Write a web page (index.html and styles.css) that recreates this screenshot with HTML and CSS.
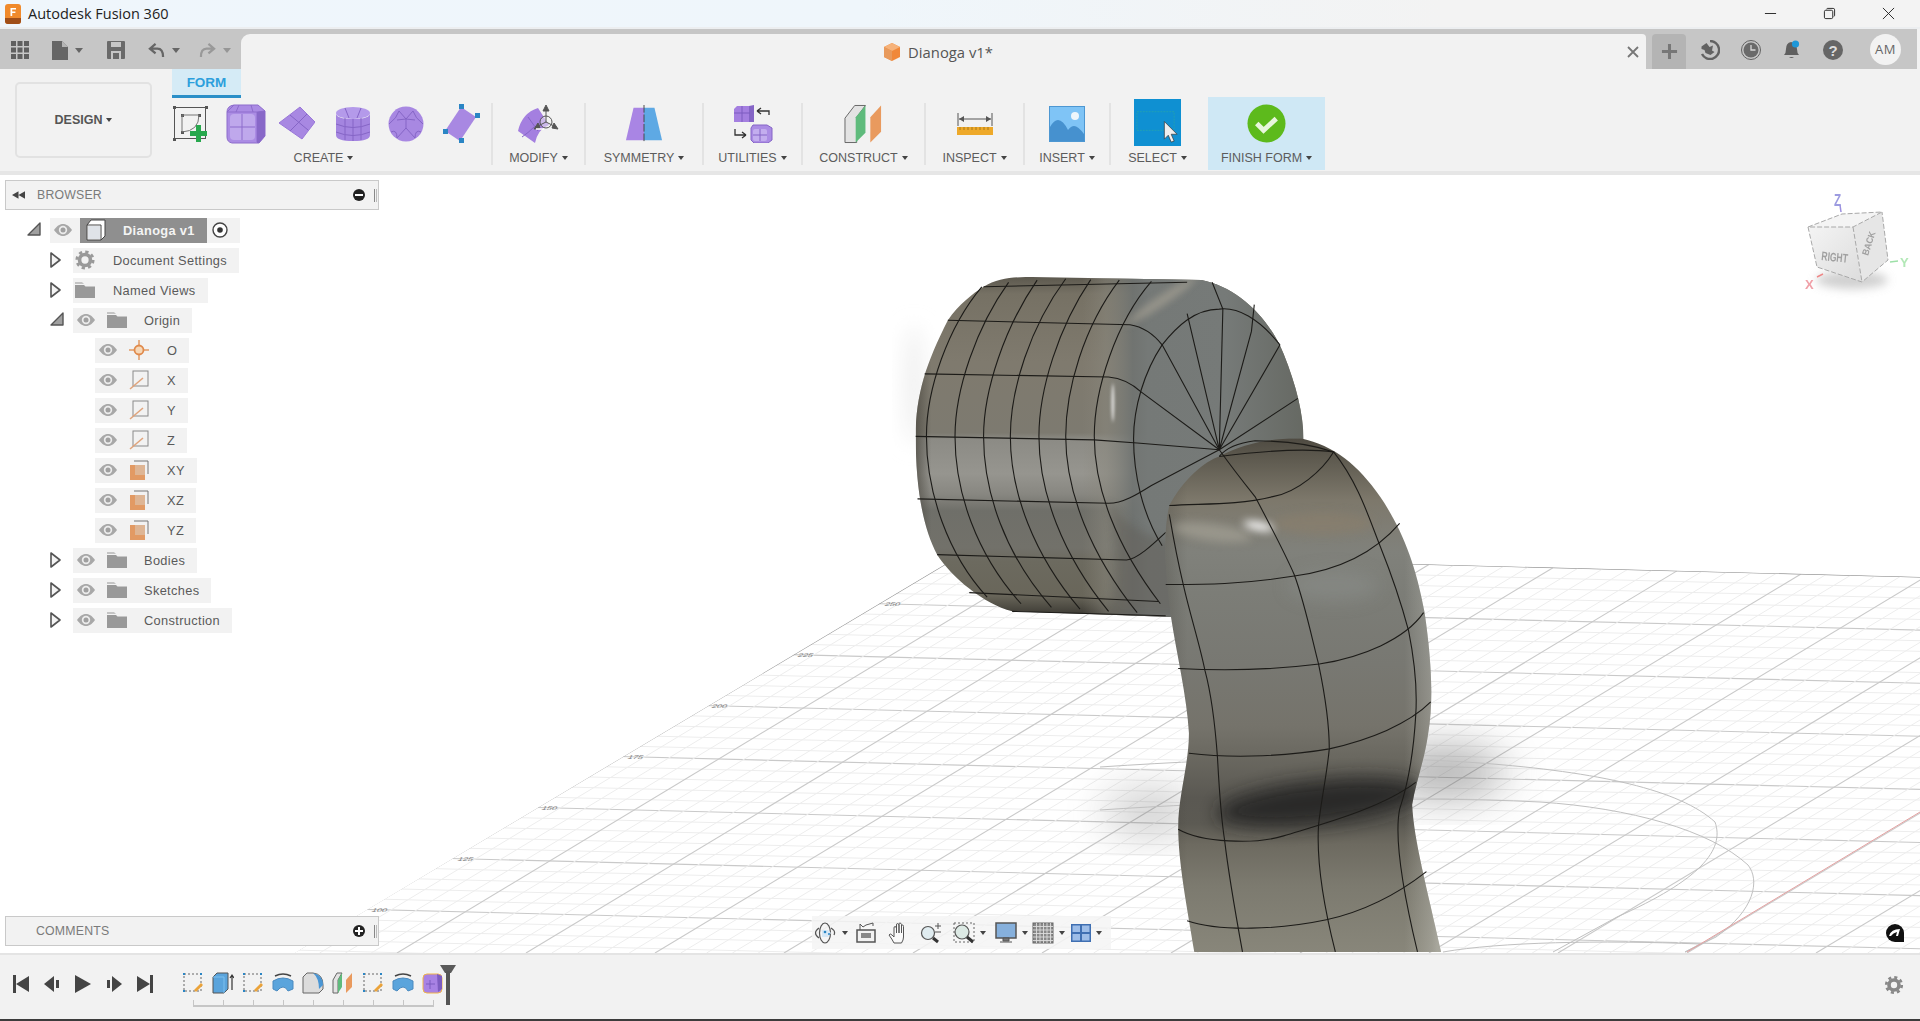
FILE: index.html
```html
<!DOCTYPE html>
<html lang="en">
<head>
<meta charset="utf-8">
<title>Autodesk Fusion 360</title>
<link rel="stylesheet" href="styles.css">
</head>
<body>
<svg class="defs" width="0" height="0" aria-hidden="true">
  <defs>
    <symbol id="eye" viewBox="0 0 20 14"><path d="M1 7C4 2.500 7.500 1 10 1s6 1.500 9 6c-3 4.500-6.500 6-9 6s-6-1.500-9-6z" fill="#a8a8a8"/><circle cx="10" cy="7" r="4.200" fill="#ececec"/><circle cx="10" cy="7" r="2.500" fill="#a0a0a0"/></symbol>
    <symbol id="folder" viewBox="0 0 20 16"><path d="M0 0h7l2 2h-9z" fill="#c4c4c4"/><path d="M0 3h9l1.500 1.500H20V16H0z" fill="#999"/></symbol>
    <symbol id="tw-right" viewBox="0 0 14 18"><path d="M2 2l9 7-9 7z" fill="#f4f4f4" stroke="#555" stroke-width="1.600" stroke-linejoin="round"/></symbol>
    <symbol id="tw-down" viewBox="0 0 16 16"><path d="M14 2v12H2z" fill="#a0a0a0" stroke="#555" stroke-width="1.400" stroke-linejoin="round"/></symbol>
    <symbol id="axis" viewBox="0 0 20 20"><rect x="4" y="1" width="15" height="15" fill="none" stroke="#8a8a8a"/><path d="M1 19L14 8" stroke="#e0a47c" stroke-width="1.600"/></symbol>
    <symbol id="plane" viewBox="0 0 20 20"><path d="M5 1h14v13" fill="none" stroke="#777" stroke-width="1"/><rect x="1" y="5" width="15" height="15" fill="#e29a64"/><rect x="6" y="5" width="10" height="10" fill="#deb594"/></symbol>
    <symbol id="mini-sketch" viewBox="0 0 22 22"><rect x="2" y="2" width="17" height="17" fill="none" stroke="#666" stroke-dasharray="2 2"/><path d="M1 1h2v2H1zM18 1h2v2h-2zM1 18h2v2H1z" fill="#2a85c4"/><path d="M12 18l7-7 2 2-7 7z" fill="#eba33a"/></symbol>
    <symbol id="mini-form" viewBox="0 0 22 22"><path d="M3 4q8-4 16 0" fill="none" stroke="#444" stroke-width="1.500"/><path d="M1 9q10-6 20 0v8l-5 2q-2-4-5-4t-6 4l-4-2z" fill="#5aa4dc" stroke="#4a8ac0"/></symbol>
  </defs>
</svg>

<header class="titlebar">
  <div class="app-title">
    <svg class="app-logo" viewBox="0 0 16 20"><rect width="16" height="20" rx="3" fill="#f08a2c"/><path d="M0 14h16v3a3 3 0 0 1-3 3H3a3 3 0 0 1-3-3z" fill="#a04e18"/><path d="M5.500 4h5.500v1.600H7.200v1.800h3.200V9H7.200v3H5.500z" fill="#fff"/></svg>
    <span>Autodesk Fusion 360</span>
  </div>
  <div class="win-controls">
    <svg class="win-btn" viewBox="0 0 14 14"><path d="M1 7h12" stroke="#222" stroke-width="1"/></svg>
    <svg class="win-btn" viewBox="0 0 14 14"><rect x="1.500" y="3.500" width="9" height="9" rx="1.500" fill="none" stroke="#222"/><path d="M4 2.500q0-1 1-1h6q1.500 0 1.500 1.500v6q0 1-1 1" fill="none" stroke="#222"/></svg>
    <svg class="win-btn" viewBox="0 0 14 14"><path d="M1 1l12 12M13 1L1 13" stroke="#222" stroke-width="1"/></svg>
  </div>
</header>

<nav class="tabbar">
  <div class="quick">
    <svg class="q-grid" viewBox="0 0 18 18" fill="#5f5f5f"><rect width="5" height="5"/><rect x="6.500" width="5" height="5"/><rect x="13" width="5" height="5"/><rect y="6.500" width="5" height="5"/><rect x="6.500" y="6.500" width="5" height="5"/><rect x="13" y="6.500" width="5" height="5"/><rect y="13" width="5" height="5"/><rect x="6.500" y="13" width="5" height="5"/><rect x="13" y="13" width="5" height="5"/></svg>
    <svg class="q-doc" viewBox="0 0 16 19"><path d="M0 0h10l6 6v13H0z" fill="#666"/><path d="M10 0v6h6z" fill="#b5b5b5"/></svg>
    <span class="q-caret"></span>
    <svg class="q-save" viewBox="0 0 18 18"><path d="M0 1a1 1 0 0 1 1-1h16a1 1 0 0 1 1 1v16a1 1 0 0 1-1 1H1a1 1 0 0 1-1-1z" fill="#6a6a6a"/><rect x="4" y="1" width="10" height="5" fill="#c6c6c6"/><rect x="4" y="10" width="10" height="8" fill="#c6c6c6"/><rect x="6" y="12" width="6" height="6" fill="#6a6a6a"/></svg>
    <svg class="q-undo" viewBox="0 0 18 16"><path d="M8 1L2 6l6 5M2 6h8q6 0 6 9" fill="none" stroke="#666" stroke-width="2.400"/></svg>
    <span class="q-caret"></span>
    <svg class="q-redo" viewBox="0 0 18 16"><path d="M10 1l6 5-6 5M16 6H8q-6 0-6 9" fill="none" stroke="#999" stroke-width="2.400"/></svg>
    <span class="q-caret q-caret-dim"></span>
  </div>
  <div class="doc-tab">
    <div class="doc-name">
      <svg class="doc-cube" viewBox="0 0 20 20"><path d="M10 1l8 4v10l-8 4-8-4V5z" fill="#f0883a"/><path d="M10 1l8 4-8 4-8-4z" fill="#f6b27a"/><path d="M2 5l8 4v10l-8-4z" fill="#e89a5c"/></svg>
      <span>Dianoga v1*</span>
    </div>
    <svg class="doc-close" viewBox="0 0 12 12"><path d="M1 1l10 10M11 1L1 11" stroke="#777" stroke-width="1.800"/></svg>
  </div>
  <div class="tab-right">
    <div class="plus-btn"><svg viewBox="0 0 18 18"><path d="M9 1v16M1 9h16" stroke="#777" stroke-width="3.200"/></svg></div>
    <svg class="tr-icon tr-first" viewBox="0 0 20 20"><path d="M10 1a9 9 0 1 1-8 13" fill="none" stroke="#626262" stroke-width="2.400"/><path d="M1.500 6.500l5-3.500 3 4 3.500-1.500-1 5 2.500 1.500-4 3-5-2-1-3-3-1z" fill="#626262"/></svg>
    <svg class="tr-icon" viewBox="0 0 20 20"><circle cx="10" cy="10" r="9.500" fill="none" stroke="#626262"/><circle cx="10" cy="10" r="7.500" fill="#6a6a6a"/><path d="M10 5v5h4.500" fill="none" stroke="#d8d8d8" stroke-width="1.300"/></svg>
    <svg class="tr-icon" viewBox="0 0 20 20"><path d="M9 2q-5 1-5 7 0 4-2 6h15q-2-2-2-6 0-6-6-7z" fill="#5f5f5f"/><path d="M7 17h5q-2.500 2-5 0z" fill="#5f5f5f"/><circle cx="13.500" cy="4" r="3.600" fill="#1d97d8"/></svg>
    <svg class="tr-icon" viewBox="0 0 20 20"><circle cx="10" cy="10" r="10" fill="#666"/><text class="help-q" x="10" y="15.500" text-anchor="middle">?</text></svg>
    <div class="avatar">AM</div>
  </div>
</nav>

<section class="ribbon">
  <div class="design-btn"><span class="caret-label">DESIGN</span></div>
  <div class="tools">
    <div class="form-tab">FORM</div>
    <div class="groups">
      <div class="group g-create">
        <div class="create-icons">
          <svg class="ic36" viewBox="0 0 36 36"><rect x="1.500" y="1.500" width="31" height="31" fill="none" stroke="#555"/><path d="M0 0h3v3H0zM32 0h3v3h-3zM0 32h3v3H0zM8 8h3v3H8zM25 8h3v3h-3zM8 25h3v3H8z" fill="#555"/><path d="M9 9h17M9 9v17M26 9q0 16-17 17" fill="none" stroke="#777"/><path d="M25 23h5v6h6v5h-6v6h-5v-6h-6v-5h6z" fill="#28a84e" transform="translate(-2 -4)"/></svg>
          <svg class="ic40" viewBox="0 0 40 40"><path d="M8 1h24l7 6v25l-6 7H6q-5-1-5-6V8q0-6 7-7z" fill="#ab8ce4" stroke="#8d6ccc"/><path d="M8 1l-7 7h30l8-1M31 8v30" fill="none" stroke="#8d6ccc"/><path d="M31 8l8-1v25l-6 7h-2z" fill="#8868c8"/><rect x="4" y="10" width="25" height="26" rx="4" fill="#bfa8ec"/><path d="M16 10v26M4 23h25" stroke="#8d6ccc"/><path d="M13 1l-3 7M25 1l2 7" stroke="#8d6ccc"/></svg>
          <svg class="ic36 ic-plane" viewBox="0 0 36 36"><path d="M21 1l15 15-13 17L0 17z" fill="#a888e2" stroke="#9a78d8"/><path d="M11 9l18 15M28 8L11 25" stroke="#8565c6" stroke-width="1"/></svg>
          <svg class="ic36" viewBox="0 0 36 36"><ellipse cx="18" cy="7" rx="17" ry="6" fill="#b49aea"/><path d="M1 7v22q0 6 17 6t17-6V7q0 6-17 6T1 7z" fill="#a485e0"/><path d="M1 18q17 7 34 0M1 26q17 7 34 0M10 12v22M26 12v22M18 13v22M10 2l4 10M26 2l-4 10" fill="none" stroke="#8565c6"/></svg>
          <svg class="ic36" viewBox="0 0 36 36"><circle cx="18" cy="18" r="17.500" fill="#a888e2"/><path d="M1 18q8-6 10-13M35 18q-8-6-10-13M11 5l7 8 7-8M18 13v9l-9 10M18 22l9 10M3 26q6-3 6 6M33 26q-6-3-6 6M9 14l9-1 9 1" fill="none" stroke="#8565c6"/></svg>
          <svg class="ic40" viewBox="0 0 40 40"><path d="M20 3l15 10-16 24L4 27z" fill="#a888e2"/><path d="M18 0h5v5h-5zM34 9h5v5h-5zM2 25h5v5H2zM18 34h5v5h-5z" fill="#2a85c4"/></svg>
        </div>
        <div class="g-label g-label-create"><span class="caret-label">CREATE</span></div>
      </div>
      <i class="sep"></i>
      <div class="group g-modify">
        <div class="g-icon"><svg class="ic-mod" viewBox="0 0 42 38"><path d="M0 26Q4 8 20 3l11 17q-11 4-14 18z" fill="#a47fe0"/><path d="M10 12l10 14M4 32q6-4 12-10" fill="none" stroke="#8565c6"/><circle cx="28" cy="17" r="6" fill="#f2f2f2" fill-opacity=".5" stroke="#555"/><path d="M28 0l-3 6h6zM28 6v11M40 24l-6-1 2-5zM28 17l8 4M16 24l6-1-2-5zM28 17l-8 4" fill="#555" stroke="#555"/><path d="M18 24h8" stroke="#fff" stroke-width="1.500"/></svg></div>
        <div class="g-label"><span class="caret-label">MODIFY</span></div>
      </div>
      <i class="sep"></i>
      <div class="group g-sym">
        <div class="g-icon"><svg class="ic-sym" viewBox="0 0 40 40"><path d="M9 3h11v34H1z" fill="#a985e4"/><path d="M20 3h11l8 34H20z" fill="#5ea9e4"/><path d="M20 0v40" stroke="#444" stroke-width="1" stroke-dasharray="8 2"/></svg></div>
        <div class="g-label"><span class="caret-label">SYMMETRY</span></div>
      </div>
      <i class="sep"></i>
      <div class="group g-util">
        <div class="g-icon"><svg class="ic-util" viewBox="0 0 40 39"><path d="M4 2h16v16H1V5z" fill="#a47fe0"/><path d="M16 2l5-1v17h-5z" fill="#8565c6"/><path d="M1 9h16M9 2v16" stroke="#7d5cc0"/><path d="M20 21h14l5 3v12l-4 3H21l-3-3V24z" fill="#ab8ce4" stroke="#8565c6"/><rect x="20" y="25" width="14" height="12" rx="2" fill="#c3adee"/><path d="M27 25v12M20 31h14" stroke="#8565c6"/><path d="M36 11V7H24M24 7l4-3M24 7l4 3M2 25v6h11M13 31l-4-3M13 31l-4 3" fill="none" stroke="#333" stroke-width="1.300"/></svg></div>
        <div class="g-label"><span class="caret-label">UTILITIES</span></div>
      </div>
      <i class="sep"></i>
      <div class="group g-con">
        <div class="g-icon"><svg class="ic-con" viewBox="0 0 40 40"><path d="M1 14L11 1h11L13 13v26H1z" fill="#e3e3e3" stroke="#666"/><path d="M12 13L22 1v28l-10 10z" fill="#5fbb7c"/><path d="M27 13L38 1v27L27 39z" fill="#e99a5e"/></svg></div>
        <div class="g-label"><span class="caret-label">CONSTRUCT</span></div>
      </div>
      <i class="sep"></i>
      <div class="group g-insp">
        <div class="g-icon"><svg class="ic-insp" viewBox="0 0 36 22"><path d="M1 0v13M35 0v13" stroke="#555"/><path d="M2 6h32" stroke="#555"/><path d="M2 6l5-3v6zM34 6l-5-3v6z" fill="#555"/><rect y="14" width="36" height="8" fill="#eea92a"/><path d="M3 14v3M7 14v3M11 14v3M15 14v3M19 14v3M23 14v3M27 14v3M31 14v3" stroke="#a87a1a"/></svg></div>
        <div class="g-label"><span class="caret-label">INSPECT</span></div>
      </div>
      <i class="sep"></i>
      <div class="group g-ins">
        <div class="g-icon"><svg class="ic-ins" viewBox="0 0 36 36"><rect width="36" height="36" fill="#4d97d2"/><rect x="1" y="1" width="34" height="34" fill="#7fc4f6"/><circle cx="26" cy="10" r="4" fill="#eef6fb"/><path d="M1 35V21q4-7 8-7 5 0 10 10 3-4 6-4 4 0 10 8v7z" fill="#4691cf"/></svg></div>
        <div class="g-label"><span class="caret-label">INSERT</span></div>
      </div>
      <i class="sep"></i>
      <div class="group g-sel">
        <div class="g-icon"><svg class="ic-sel" viewBox="0 0 48 48"><rect width="48" height="48" fill="#0f90d2"/><rect x="3" y="13" width="38" height="19" fill="none" stroke="#2aa6a6" stroke-width=".7" stroke-dasharray="2 1"/><path d="M31 23l0 18 4-4 3 7 3-1-3-7 6 0z" fill="#eee" stroke="#333" stroke-width=".7"/></svg></div>
        <div class="g-label"><span class="caret-label">SELECT</span></div>
      </div>
      <div class="group g-finish">
        <div class="g-icon g-icon-fin"><svg class="ic-fin" viewBox="0 0 40 40"><circle cx="20" cy="20" r="19.500" fill="#5dba1c"/><path d="M10 20l7 7 13-12" fill="none" stroke="#e8f6dc" stroke-width="5"/></svg></div>
        <div class="g-label"><span class="caret-label">FINISH FORM</span></div>
      </div>
    </div>
  </div>
</section>

<main class="viewport">
  <svg class="scene" viewBox="0 175 1920 778" width="1920" height="778">
    <defs>
      <clipPath id="floor"><path d="M965 552.500L1920 577V953H295z"/></clipPath>
      <filter id="b40" x="-60%" y="-60%" width="220%" height="220%"><feGaussianBlur stdDeviation="22"/></filter>
      <filter id="b12" x="-60%" y="-60%" width="220%" height="220%"><feGaussianBlur stdDeviation="10"/></filter>
      <filter id="b4" x="-60%" y="-100%" width="220%" height="300%"><feGaussianBlur stdDeviation="5"/></filter>
      <filter id="soft" x="-50%" y="-200%" width="200%" height="500%"><feGaussianBlur stdDeviation="24 20"/></filter>
      <filter id="soft2" x="-50%" y="-200%" width="200%" height="500%"><feGaussianBlur stdDeviation="14 9"/></filter>
      <filter id="b2" x="-300%" y="-50%" width="700%" height="200%"><feGaussianBlur stdDeviation="5"/></filter>
      <filter id="b1"><feGaussianBlur stdDeviation=".35"/></filter>
      <linearGradient id="s1" gradientUnits="userSpaceOnUse" x1="0" y1="38" x2="0" y2="797">
        <stop offset="0" stop-color="#5c584e"/><stop offset=".05" stop-color="#767164"/><stop offset=".25" stop-color="#7f7a6e"/><stop offset=".46" stop-color="#7d7a70"/><stop offset=".48" stop-color="#8c8b85"/><stop offset=".58" stop-color="#96958f"/><stop offset=".64" stop-color="#888781"/><stop offset=".69" stop-color="#6f6f69"/><stop offset=".8" stop-color="#72716a"/><stop offset=".84" stop-color="#6c6a5f"/><stop offset=".94" stop-color="#69665a"/><stop offset="1" stop-color="#3a3832"/>
      </linearGradient>
      <linearGradient id="s1h" gradientUnits="userSpaceOnUse" x1="100" y1="0" x2="1185" y2="0">
        <stop offset="0" stop-color="#4a473f" stop-opacity=".7"/><stop offset=".04" stop-color="#4a473f" stop-opacity="0"/><stop offset=".43" stop-color="#8a867b" stop-opacity="0"/><stop offset=".49" stop-color="#8a887e" stop-opacity=".5"/><stop offset=".56" stop-color="#6f7371" stop-opacity=".9"/><stop offset=".6" stop-color="#757977"/><stop offset=".8" stop-color="#767a78"/><stop offset="1" stop-color="#666963"/>
      </linearGradient>
      <linearGradient id="s2" gradientUnits="userSpaceOnUse" x1="0" y1="400" x2="0" y2="1550">
        <stop offset="0" stop-color="#4f4b42"/><stop offset=".05" stop-color="#625e53"/><stop offset=".12" stop-color="#7d786b"/><stop offset=".17" stop-color="#7f7d74"/><stop offset=".22" stop-color="#80817b"/><stop offset=".3" stop-color="#7c7d77"/><stop offset=".44" stop-color="#787872"/><stop offset=".56" stop-color="#75736b"/><stop offset=".62" stop-color="#6a6860"/><stop offset=".7" stop-color="#5a5852"/><stop offset=".75" stop-color="#5c5a53"/><stop offset=".79" stop-color="#6d6a60"/><stop offset=".87" stop-color="#7c7a6f"/><stop offset="1" stop-color="#88867a"/>
      </linearGradient>
      <linearGradient id="s2h" gradientUnits="userSpaceOnUse" x1="800" y1="0" x2="1560" y2="0">
        <stop offset="0" stop-color="#3a3832" stop-opacity=".25"/><stop offset=".08" stop-color="#3a3832" stop-opacity="0"/><stop offset=".88" stop-color="#c8c8c0" stop-opacity="0"/><stop offset=".98" stop-color="#c8c8c0" stop-opacity=".35"/><stop offset="1" stop-color="#d8d8d0" stop-opacity=".4"/>
      </linearGradient>
      <linearGradient id="cube-l" x1="0" y1="0" x2="1" y2="1"><stop offset="0" stop-color="#f4f4f4"/><stop offset="1" stop-color="#dcdcdc"/></linearGradient>
      <clipPath id="shape1"><path d="M290 60C330 40 380 38 420 38L900 45C1000 60 1090 130 1130 210C1170 290 1190 360 1185 420L950 520L860 610L840 800L370 787C290 770 200 710 160 660C120 600 100 510 100 395C100 300 130 230 190 135C220 100 260 75 290 60Z"/></clipPath>
      <clipPath id="shape2"><path d="M810 550C850 490 910 450 950 440C1020 410 1100 398 1180 400C1270 415 1340 460 1400 530C1460 600 1500 680 1525 790C1545 900 1550 990 1535 1060C1525 1120 1500 1170 1490 1220C1495 1300 1530 1400 1571 1550H880C860 1450 835 1350 835 1270C835 1200 865 1130 865 1060C860 980 830 880 815 800C800 700 790 620 810 550Z"/></clipPath>
    </defs>

    <g clip-path="url(#floor)">
      <g id="grid"></g>
      <ellipse cx="1445" cy="772" rx="60" ry="24" fill="#555" opacity=".5" filter="url(#b40)"/>
      <ellipse cx="1150" cy="812" rx="45" ry="20" fill="#555" opacity=".35" filter="url(#b40)"/>
      <g fill="none" stroke="#c0c0c0">
        <path d="M1100 767C1250 757 1370 755 1480 763C1600 772 1680 790 1715 822C1725 850 1700 880 1617 917L1553 952"/>
        <path d="M1100 810C1220 802 1400 795 1540 802C1630 808 1710 830 1748 865C1760 880 1755 910 1716 937L1685 952"/>
        <path d="M1443 952C1500 942 1600 940 1700 944L1685 952"/>
      </g>
      <path d="M1687 952L1920 812" stroke="#e4a0a0" fill="none"/>
      <path d="M965 552.500L295 952" stroke="#8c8c8c" stroke-width="1.200"/>
      <path d="M965 552.500L1920 577" stroke="#9a9a9a"/>
    </g>

    <g class="rulers">
      <text transform="translate(884 606) skewX(-32) scale(1 .6)">250</text>
      <text transform="translate(797 657) skewX(-32) scale(1 .6)">225</text>
      <text transform="translate(711 708) skewX(-32) scale(1 .6)">200</text>
      <text transform="translate(627 759) skewX(-32) scale(1 .6)">175</text>
      <text transform="translate(541 810) skewX(-32) scale(1 .6)">150</text>
      <text transform="translate(457 861) skewX(-32) scale(1 .6)">125</text>
      <text transform="translate(371 912) skewX(-32) scale(1 .6)">100</text>
    </g>

    <ellipse cx="914" cy="385" rx="10" ry="60" fill="#f0f0f0" filter="url(#b12)"/>

    <g transform="translate(880 260) scale(.35714 .44643)">
      <g clip-path="url(#shape1)">
        <rect x="80" y="20" width="1200" height="800" fill="url(#s1)"/>
        <rect x="80" y="20" width="1200" height="800" fill="url(#s1h)"/>
        <path d="M640 540Q700 620 860 640V800H640Q680 660 640 540z" fill="#5e5c54" opacity=".45" filter="url(#soft2)"/>
        <ellipse cx="652" cy="320" rx="4" ry="42" fill="#fff" opacity=".8" filter="url(#b2)"/>
        <ellipse cx="790" cy="90" rx="110" ry="12" fill="#a8a395" opacity=".65" filter="url(#soft2)" transform="rotate(-28 790 90)"/>
      </g>
      <g class="mesh">
        <path d="M285 60C190 150 130 290 130 395C130 520 190 660 300 755"/>
        <path d="M360 50C270 150 210 290 210 395C210 520 270 660 395 770"/>
        <path d="M440 45C350 150 290 290 290 395C290 520 350 660 480 778"/>
        <path d="M520 42C420 150 365 290 365 395C365 520 430 660 560 782"/>
        <path d="M590 44C500 150 445 290 445 395C445 520 510 660 640 787"/>
        <path d="M670 45C570 150 520 290 520 395C520 520 590 660 720 790"/>
        <path d="M760 48C660 140 600 290 600 395C600 510 660 640 785 770"/>
        <path d="M190 135L700 145C740 150 770 170 790 190L950 425"/>
        <path d="M125 255L640 262C680 265 710 280 730 295L950 425"/>
        <path d="M100 395L600 403L720 410L950 425"/>
        <path d="M105 535L640 545C680 545 720 525 760 505L950 425"/>
        <path d="M160 660L690 672C720 670 760 640 800 610"/>
        <path d="M250 745L780 765"/>
        <path d="M370 787L800 797"/>
        <path d="M290 60L860 50"/>
        <path d="M1120 190C1060 130 1000 105 950 110C880 110 830 150 790 190C740 250 710 330 710 400C710 480 735 570 790 640"/>
        <path d="M950 425L960 110L930 50M950 425L1040 160L1048 100M950 425L1120 190M950 425L1170 310M950 425L860 120"/>
      </g>

      <g clip-path="url(#shape2)">
        <rect x="780" y="390" width="800" height="1170" fill="url(#s2)"/>
        <rect x="780" y="390" width="800" height="1170" fill="url(#s2h)"/>
        <ellipse cx="1240" cy="590" rx="140" ry="26" fill="#8a7f6c" opacity=".6" filter="url(#soft2)"/>
        <ellipse cx="930" cy="610" rx="110" ry="20" fill="#a9a69a" opacity=".6" filter="url(#soft2)" transform="rotate(6 930 610)"/>
        <ellipse cx="1060" cy="596" rx="42" ry="10" fill="#fff" opacity=".95" filter="url(#soft2)" transform="rotate(8 1060 596)"/>
        <ellipse cx="1270" cy="730" rx="130" ry="34" fill="#8f9390" opacity=".45" filter="url(#soft)"/>
        <ellipse cx="1230" cy="1215" rx="290" ry="50" fill="#242320" opacity=".85" filter="url(#soft)" transform="rotate(-5 1230 1215)"/>
      </g>
      <g class="mesh">
        <path d="M950 425C990 470 1030 510 1050 530C1090 590 1130 650 1160 705C1190 770 1210 850 1228 905C1245 970 1258 1040 1258 1095C1250 1160 1235 1210 1228 1265C1222 1340 1240 1440 1275 1550"/>
        <path d="M810 570C825 640 835 680 850 730C870 800 895 860 910 920C930 980 940 1060 945 1115C950 1190 955 1250 965 1300C975 1370 990 1440 1015 1550"/>
        <path d="M1270 430C1340 500 1370 580 1400 640C1430 700 1460 770 1480 830C1495 890 1505 960 1500 1020C1495 1090 1480 1170 1455 1230C1440 1290 1460 1400 1505 1550"/>
        <path d="M810 550C900 545 1000 550 1100 530C1170 520 1240 470 1270 430C1200 410 1120 405 1050 405C1000 410 970 420 950 440"/>
        <path d="M950 440C1050 430 1180 420 1270 430"/>
        <path d="M800 727C900 727 1000 728 1160 708C1280 695 1380 660 1455 590"/>
        <path d="M835 915C950 920 1100 918 1230 905C1350 890 1470 850 1522 790"/>
        <path d="M865 1105C1000 1118 1150 1110 1258 1095C1370 1075 1480 1040 1542 990"/>
        <path d="M835 1275C900 1305 1050 1310 1130 1290C1230 1265 1400 1230 1500 1170"/>
        <path d="M860 1480C950 1505 1120 1500 1250 1478C1350 1460 1450 1420 1530 1370"/>
      </g>
    </g>

    <g class="cube" filter="url(#b1)">
      <ellipse cx="1852" cy="280" rx="36" ry="9" fill="#aaa" opacity=".55" filter="url(#b4)"/>
      <path d="M1808 227L1842 214L1882 212L1853 227Z" fill="#f4f4f4"/>
      <path d="M1808 227L1853 227L1862 282L1817 267Z" fill="url(#cube-l)"/>
      <path d="M1853 227L1882 212L1888 260L1862 282Z" fill="#e6e6e6"/>
      <path class="cube-edge" d="M1808 227L1842 214L1882 212L1853 227L1808 227L1817 267L1862 282L1888 260L1882 212M1853 227L1862 282"/>
      <text class="cube-txt" transform="translate(1821 260) rotate(6) scale(.9 1.3)">RIGHT</text>
      <text class="cube-txt" transform="translate(1868 256) rotate(-72) scale(.9 1)" >BACK</text>
      <path d="M1841 212L1840 205" stroke="#9c8fe0" stroke-width="1.500"/>
      <text class="axis-z" transform="translate(1834 206) scale(.9 1.2)">Z</text>
      <path d="M1817 277L1823 274" stroke="#e88" stroke-width="1.500"/>
      <text class="axis-x" x="1805" y="289">X</text>
      <path d="M1890 262L1898 261" stroke="#9de0a8" stroke-width="1.500"/>
      <text class="axis-y" x="1900" y="267">Y</text>
    </g>
  </svg>

  <aside class="panel panel-browser">
    <svg class="p-rew" viewBox="0 0 14 8"><path d="M7 0v8L0 4zM14 0v8L7 4z" fill="#444"/></svg>
    <span class="p-title">BROWSER</span>
    <span class="p-round"><i class="p-minus"></i></span>
    <i class="p-grip"></i>
  </aside>

  <div class="tree">
    <div class="row lv0">
      <svg class="twisty tw-l" width="16" height="16"><use href="#tw-down"/></svg>
      <div class="chip chip-root">
        <svg class="eye"><use href="#eye"/></svg>
        <div class="doc-bar">
          <svg class="comp" viewBox="0 0 22 22"><path d="M3 6L7 1h14v16l-4 4H3z" fill="#fff" stroke="#444"/><path d="M3 6h14v15" fill="none" stroke="#444"/><rect x="4" y="7" width="12" height="13" fill="#dfe3e8"/></svg>
          <span>Dianoga v1</span>
        </div>
        <svg class="radio" viewBox="0 0 16 16"><circle cx="8" cy="8" r="7" fill="#fff" stroke="#444" stroke-width="1.400"/><circle cx="8" cy="8" r="2.800" fill="#333"/></svg>
      </div>
    </div>
    <div class="row lv1">
      <svg class="twisty tw-m" width="14" height="18"><use href="#tw-right"/></svg>
      <div class="chip chip-plain">
        <svg class="gear" viewBox="0 0 22 22"><circle cx="11" cy="11" r="6" fill="none" stroke="#999" stroke-width="4"/><circle cx="11" cy="11" r="9" fill="none" stroke="#999" stroke-width="3" stroke-dasharray="3.600 3.470"/></svg>
        <span class="name">Document Settings</span>
      </div>
    </div>
    <div class="row lv1">
      <svg class="twisty tw-m" width="14" height="18"><use href="#tw-right"/></svg>
      <div class="chip chip-plain">
        <svg class="ficon"><use href="#folder"/></svg>
        <span class="name">Named Views</span>
      </div>
    </div>
    <div class="row lv1">
      <svg class="twisty tw-m" width="16" height="16"><use href="#tw-down"/></svg>
      <div class="chip">
        <svg class="eye"><use href="#eye"/></svg>
        <svg class="ficon"><use href="#folder"/></svg>
        <span class="name">Origin</span>
      </div>
    </div>
    <div class="row lv2"><div class="chip">
      <svg class="eye"><use href="#eye"/></svg>
      <svg class="oicon" viewBox="0 0 20 20"><path d="M10 0v20M0 10h20" stroke="#e29a64" stroke-width="1.500"/><circle cx="10" cy="10" r="4.500" fill="#f6d8b8" stroke="#e08a4c" stroke-width="1.800"/></svg>
      <span class="name">O</span>
    </div></div>
    <div class="row lv2"><div class="chip">
      <svg class="eye"><use href="#eye"/></svg><svg class="oicon"><use href="#axis"/></svg><span class="name">X</span>
    </div></div>
    <div class="row lv2"><div class="chip">
      <svg class="eye"><use href="#eye"/></svg><svg class="oicon"><use href="#axis"/></svg><span class="name">Y</span>
    </div></div>
    <div class="row lv2"><div class="chip">
      <svg class="eye"><use href="#eye"/></svg><svg class="oicon"><use href="#axis"/></svg><span class="name">Z</span>
    </div></div>
    <div class="row lv2"><div class="chip">
      <svg class="eye"><use href="#eye"/></svg><svg class="oicon"><use href="#plane"/></svg><span class="name">XY</span>
    </div></div>
    <div class="row lv2"><div class="chip">
      <svg class="eye"><use href="#eye"/></svg><svg class="oicon"><use href="#plane"/></svg><span class="name">XZ</span>
    </div></div>
    <div class="row lv2"><div class="chip">
      <svg class="eye"><use href="#eye"/></svg><svg class="oicon"><use href="#plane"/></svg><span class="name">YZ</span>
    </div></div>
    <div class="row lv1">
      <svg class="twisty tw-m" width="14" height="18"><use href="#tw-right"/></svg>
      <div class="chip"><svg class="eye"><use href="#eye"/></svg><svg class="ficon"><use href="#folder"/></svg><span class="name">Bodies</span></div>
    </div>
    <div class="row lv1">
      <svg class="twisty tw-m" width="14" height="18"><use href="#tw-right"/></svg>
      <div class="chip"><svg class="eye"><use href="#eye"/></svg><svg class="ficon"><use href="#folder"/></svg><span class="name">Sketches</span></div>
    </div>
    <div class="row lv1">
      <svg class="twisty tw-m" width="14" height="18"><use href="#tw-right"/></svg>
      <div class="chip"><svg class="eye"><use href="#eye"/></svg><svg class="ficon"><use href="#folder"/></svg><span class="name">Construction</span></div>
    </div>
  </div>

  <aside class="panel panel-comments">
    <span class="p-title p-title-c">COMMENTS</span>
    <span class="p-round"><i class="p-plus"></i></span>
    <i class="p-grip"></i>
  </aside>

  <div class="navbar">
    <svg class="nv nv-orbit" viewBox="0 0 22 22"><ellipse cx="11" cy="11" rx="5.500" ry="10" fill="none" stroke="#555" stroke-width="1.200"/><path d="M5 6Q-2 11 5 16M17 6q5 3 3 7" fill="none" stroke="#555" stroke-width="1.200"/><path d="M8 8h6l3 3-3 4H8z" fill="#d6e8f6"/><circle cx="11" cy="10" r="1.300" fill="#2a85c4"/><circle cx="15" cy="12" r="1" fill="#2a85c4"/></svg>
    <span class="nv-caret"></span>
    <svg class="nv nv-look" viewBox="0 0 22 22"><path d="M2 8h18v12H2z" fill="#f2f2f2" stroke="#555" stroke-width="1.500"/><rect x="6" y="11" width="10" height="5" fill="#888"/><path d="M5 8V2l3 3 3-2 7-2v3" fill="none" stroke="#555"/></svg>
    <svg class="nv nv-hand" viewBox="0 0 22 22"><path d="M6 21q-2-4-5-8 1-2 3 0l2 2V6q0-1.500 1-1.500T8.500 6v5V3q0-1.500 1-1.500T11 3v8-9q0-1 1-1t1.500 1.500V11 4q0-1 1-1t1 1.500V15q0 3-2 6z" fill="#fafafa" stroke="#555"/></svg>
    <svg class="nv nv-zoom" viewBox="0 0 22 22"><circle cx="8" cy="11" r="6.500" fill="#e0ecf0" stroke="#555" stroke-width="1.200"/><path d="M13 16l5 4" stroke="#333" stroke-width="3"/><path d="M18 1v6M15 4h6M15 10h6" stroke="#555"/></svg>
    <svg class="nv nv-fit" viewBox="0 0 22 22"><rect x="1" y="1" width="20" height="19" fill="none" stroke="#666" stroke-dasharray="2 2"/><circle cx="9" cy="10" r="7" fill="#dce9e4" stroke="#555" stroke-width="1.200"/><path d="M14 15l6 5" stroke="#333" stroke-width="3"/></svg>
    <span class="nv-caret nv-caret-s"></span>
    <svg class="nv nv-disp" viewBox="0 0 22 22"><rect x="1" y="1" width="20" height="15" fill="#86b0dc" stroke="#555" stroke-width="1.500"/><path d="M8 16h6v3H8zM5 20h12" fill="#777" stroke="#555"/></svg>
    <span class="nv-caret nv-caret-s"></span>
    <svg class="nv nv-grid" viewBox="0 0 22 22"><rect x="1" y="1" width="20" height="20" fill="#888" stroke="#666"/><path d="M4.500 1v20M8 1v20M11.500 1v20M15 1v20M18.500 1v20M1 4.500h20M1 8h20M1 11.500h20M1 15h20M1 18.500h20" stroke="#dcdcdc" stroke-width=".9"/></svg>
    <span class="nv-caret nv-caret-s"></span>
    <svg class="nv nv-views" viewBox="0 0 20 18"><rect width="20" height="18" fill="#3f6fb2"/><rect x="1.500" y="1.500" width="7.500" height="6.500" fill="#9dbde8"/><rect x="11" y="1.500" width="7.500" height="6.500" fill="#9dbde8"/><rect x="1.500" y="10" width="7.500" height="6.500" fill="#9dbde8"/><rect x="11" y="10" width="7.500" height="6.500" fill="#9dbde8"/></svg>
    <span class="nv-caret nv-caret-s"></span>
  </div>

  <svg class="a360" viewBox="0 0 18 18"><path d="M9 0a9 9 0 1 0 0 18h9V9a9 9 0 0 0-9-9z" fill="#111"/><path d="M3 12q2-7 11-7l-2 7h-2l1-4q-4 1-6 4z" fill="#fff"/></svg>
</main>

<footer class="timeline">
  <div class="transport">
    <svg class="tp" viewBox="0 0 16 18" fill="#444"><rect width="3" height="18"/><path d="M16 1v16L3 9z"/></svg>
    <svg class="tp" viewBox="0 0 16 18" fill="#444"><path d="M10 1v16L0 9z"/><rect x="12" y="5" width="3" height="8"/></svg>
    <svg class="tp" viewBox="0 0 16 18" fill="#444"><path d="M0 0l16 9-16 9z"/></svg>
    <svg class="tp" viewBox="0 0 16 18" fill="#444"><rect x="1" y="5" width="3" height="8"/><path d="M6 1l10 8-10 8z"/></svg>
    <svg class="tp" viewBox="0 0 16 18" fill="#444"><path d="M0 1l13 8-13 8z"/><rect x="13" width="3" height="18"/></svg>
  </div>
  <div class="history">
    <div class="hist-icons">
      <svg class="hi"><use href="#mini-sketch"/></svg>
      <svg class="hi" viewBox="0 0 22 22"><path d="M1 5l4-4h11v16l-4 4H1z" fill="#5aa4dc" stroke="#555"/><path d="M1 5h11v16" fill="none" stroke="#7cc0ee"/><path d="M20 18V4M18 6l2-3 2 3" fill="none" stroke="#333" stroke-width="1.200"/></svg>
      <svg class="hi"><use href="#mini-sketch"/></svg>
      <svg class="hi"><use href="#mini-form"/></svg>
      <svg class="hi" viewBox="0 0 22 22"><path d="M1 5l4-4h6q10 1 10 12v4l-4 4H1z" fill="#dcdcdc" stroke="#666"/><path d="M11 1q10 2 10 12l-4 4Q17 6 11 1z" fill="#4a96d4"/></svg>
      <svg class="hi" viewBox="0 0 22 22"><path d="M1 8l4-7h5L6 8v13H1z" fill="#e3e3e3" stroke="#666"/><path d="M6 8l4-7v14l-4 6z" fill="#5fbb7c"/><path d="M14 8l6-7v14l-6 6z" fill="#e99a5e"/></svg>
      <svg class="hi"><use href="#mini-sketch"/></svg>
      <svg class="hi"><use href="#mini-form"/></svg>
      <svg class="hi" viewBox="0 0 22 22"><rect x="1" y="2" width="19" height="19" rx="4" fill="#a882e4" stroke="#f0b44a"/><path d="M15 2l5 2v13l-4 3z" fill="#7d5cc0"/><path d="M8 8v9M4 12h9" stroke="#7d5cc0"/></svg>
    </div>
    <div class="hist-rail"><i></i><i></i><i></i><i></i><i></i><i></i><i></i><i></i><i></i></div>
    <svg class="marker" viewBox="0 0 16 40"><path d="M0 0h16l-5 8H5z" fill="#5a5a5a"/><rect x="6" y="6" width="4" height="34" fill="#555"/></svg>
  </div>
  <svg class="tl-gear" viewBox="0 0 22 22"><circle cx="11" cy="11" r="5.500" fill="none" stroke="#888" stroke-width="4"/><circle cx="11" cy="11" r="8.500" fill="none" stroke="#888" stroke-width="3" stroke-dasharray="3.340 3.340"/></svg>
</footer>
<script src="grid.js"></script>
</body>
</html>
```

FILE: styles.css
```css
* { box-sizing: border-box; }
html, body { margin: 0; height: 100%; }
body {
  width: 1920px; height: 1021px; overflow: hidden;
  display: flex; flex-direction: column;
  background: #f2f2f2; color: #555;
  font-family: "Liberation Sans", Arial, sans-serif;
}
.defs { position: absolute; }

/* title bar */
.titlebar {
  height: 29px; flex: none; display: flex; align-items: center; justify-content: space-between;
  background: linear-gradient(90deg, #eff6fc 0, #eff6fb 45%, #f3f3f3 75%);
  border-bottom: 2px solid #eceef0;
}
.app-title { display: flex; align-items: center; gap: 7px; padding-left: 5px; font: 14.500px "Open Sans", "Noto Sans", sans-serif; color: #222; }
.app-logo { width: 16px; height: 20px; }
.win-controls { display: flex; gap: 46px; padding-right: 25px; }
.win-btn { width: 13px; height: 13px; }

/* quick bar + doc tab */
.tabbar { height: 40px; flex: none; display: flex; width: 1917px; background: #c6c6c6; }
.quick { width: 241px; display: flex; align-items: center; padding-left: 11px; padding-top: 2px; }
.q-grid { width: 18px; height: 18px; }
.q-doc { width: 16px; height: 19px; margin-left: 23px; }
.q-save { width: 18px; height: 18px; margin-left: 24px; }
.q-undo { width: 17px; height: 15px; margin-left: 23px; }
.q-redo { width: 17px; height: 15px; margin-left: 19px; }
.q-caret { width: 0; height: 0; margin-left: 7px; border: 4px solid transparent; border-top: 5px solid #666; border-bottom: 0; }
.q-caret-dim { border-top-color: #969696; }
.doc-tab {
  width: 1405px; margin-top: 5px; position: relative;
  display: flex; align-items: center; justify-content: center;
  background: #f2f2f2; border-top-left-radius: 9px; border-top-right-radius: 4px;
}
.doc-name { display: flex; align-items: center; gap: 6px; font: 14.800px "Open Sans", sans-serif; color: #555; margin-right: 12px; }
.doc-cube { width: 20px; height: 20px; }
.doc-close { width: 12px; height: 12px; position: absolute; right: 7px; top: 12px; }
.tab-right { flex: 1; display: flex; align-items: center; padding-left: 6px; }
.plus-btn { width: 34px; height: 35px; margin-top: 5px; background: #b4b4b4; border-radius: 4px 4px 0 0; display: flex; align-items: center; justify-content: center; }
.plus-btn svg { width: 17px; height: 17px; }
.tr-icon { width: 20px; height: 20px; margin-left: 21px; margin-top: 2px; }
.tr-first { margin-left: 14px; }
.help-q { font: bold 15px "Liberation Sans", sans-serif; fill: #ddd; }
.avatar { width: 31px; height: 31px; margin-left: 27px; border-radius: 50%; background: #f2f2f2; color: #666; font: 13px/31px "Open Sans", sans-serif; text-align: center; letter-spacing: .5px; }

/* ribbon */
.ribbon { height: 106px; flex: none; display: flex; background: #f2f2f2; border-bottom: 4px solid #e6e6e6; box-shadow: 0 3px 0 #f4f4f4; padding-left: 15px; }
.design-btn { width: 137px; height: 76px; margin-top: 13px; border: 2px solid #e2e2e2; border-radius: 5px; display: flex; align-items: center; justify-content: center; font-size: 12.500px; font-weight: 700; color: #555; }
.caret-label::after { content: ""; display: inline-block; margin-left: 4px; vertical-align: 2px; border: 3.500px solid transparent; border-top: 4px solid #444; border-bottom: 0; }
.tools { margin-left: 20px; display: flex; flex-direction: column; }
.form-tab { width: 69px; height: 29px; background: #d5ebf6; border-bottom: 3px solid #2a8fc8; color: #2d9fdc; font-size: 13.500px; font-weight: 700; text-align: center; line-height: 27px; }
.groups { display: flex; height: 72px; }
.group { display: flex; flex-direction: column; align-items: center; }
.g-create { width: 319px; }
.g-modify { width: 91px; }
.g-sym { width: 116px; }
.g-util { width: 97px; }
.g-con { width: 121px; }
.g-insp { width: 97px; }
.g-ins { width: 84px; }
.g-sel { width: 97px; padding-right: 4px; }
.g-finish { width: 117px; background: #cfe8f5; margin-top: -1px; height: 73px; }
.sep { width: 2px; height: 62px; margin-top: 5px; background: #e3e3e3; flex: none; }
.g-icon { height: 51px; display: flex; align-items: center; justify-content: center; }
.g-icon-fin { height: 52px; }
.create-icons { height: 51px; width: 308px; align-self: flex-start; margin-left: 1px; display: flex; align-items: center; justify-content: space-between; }
.ic36 { width: 36px; height: 36px; }
.ic40 { width: 40px; height: 40px; }
.ic-plane { margin-left: -4px; margin-right: 4px; }
.ic-mod { width: 42px; height: 38px; }
.ic-sym { width: 40px; height: 38px; }
.ic-util { width: 40px; height: 39px; }
.ic-con { width: 39px; height: 40px; }
.ic-insp { width: 36px; height: 22px; }
.ic-ins { width: 36px; height: 36px; }
.ic-sel { width: 47px; height: 47px; margin-top: -2px; }
.ic-fin { width: 39px; height: 39px; }
.g-label { height: 18px; font-size: 12.500px; line-height: 18px; color: #5c5c5c; white-space: nowrap; }
.g-label-create { margin-right: 16px; }

/* viewport */
.viewport { flex: 1; position: relative; background: #fff; overflow: hidden; }
.scene { position: absolute; left: 0; top: 0; display: block; }
.mesh path { fill: none; stroke: #1c1b18; stroke-width: 1.100; vector-effect: non-scaling-stroke; }
.rulers text { font: 9px "Liberation Sans", sans-serif; fill: #7c7c7c; }
.cube-edge { fill: none; stroke: #a8a8a8; stroke-dasharray: 5 2; }
.cube-txt { font: bold 9.500px "Liberation Sans", sans-serif; fill: #a0a0a0; }
.axis-z, .axis-x, .axis-y { font: bold 13px "Liberation Sans", sans-serif; }
.axis-z { fill: #9c9be0; }
.axis-x { fill: #f0a0a8; }
.axis-y { fill: #b2e8b6; }

.panel { position: absolute; left: 5px; width: 374px; height: 30px; display: flex; align-items: center; background: #f2f2f2; border: 1px solid #c9c9c9; }
.panel-browser { top: 5px; }
.panel-comments { bottom: 7px; }
.p-rew { width: 13px; height: 8px; margin-left: 6px; }
.p-title { margin-left: 12px; font-size: 12.300px; color: #7a7a7a; letter-spacing: .2px; }
.p-title-c { margin-left: 30px; }
.p-round { margin-left: auto; width: 12px; height: 12px; border-radius: 50%; background: #222; display: flex; align-items: center; justify-content: center; position: relative; }
.p-minus { width: 8px; height: 2px; background: #fff; }
.p-plus { width: 8px; height: 2px; background: #fff; position: relative; }
.p-plus::after { content: ""; position: absolute; left: 3px; top: -3px; width: 2px; height: 8px; background: #fff; }
.p-grip { width: 3px; height: 13px; margin: 0 1px 0 9px; border-left: 1px solid #888; border-right: 1px solid #bbb; }

.tree { position: absolute; left: 0; top: 40px; display: flex; flex-direction: column; font-size: 12.800px; letter-spacing: .35px; color: #5a5a5a; }
.row { height: 30px; display: flex; align-items: center; position: relative; }
.lv0 { padding-left: 50px; }
.lv1 { padding-left: 73px; }
.lv2 { padding-left: 95px; }
.twisty { position: absolute; }
.tw-l { left: 26px; top: 6px; }
.tw-m { left: 49px; top: 6px; }
.chip { height: 25px; display: flex; align-items: center; background: #f2f2f2; padding: 0 12px 0 2px; }
.chip-root { width: 190px; padding: 0; }
.eye { width: 20px; height: 14px; flex: none; margin-left: 1px; }
.ficon { width: 20px; height: 16px; flex: none; margin-left: 11px; margin-right: 17px; }
.chip-plain .ficon, .gear { margin-left: 0; margin-right: 18px; width: 20px; height: 16px; }
.gear { height: 20px; }
.lv1 .chip .eye + .ficon { margin-left: 11px; }
.oicon { width: 20px; height: 20px; flex: none; margin-left: 11px; margin-right: 18px; }
.chip-root .eye { margin-left: 3px; }
.doc-bar { width: 127px; height: 25px; margin-left: 7px; display: flex; align-items: center; background: #8f8f8f; color: #f4f4f4; font-weight: 700; }
.comp { width: 22px; height: 22px; margin-left: 4px; margin-right: 17px; }
.radio { width: 16px; height: 16px; margin-left: 5px; }

.navbar { position: absolute; left: 812px; top: 741px; height: 33px; padding: 0 9px 0 2px; display: flex; align-items: center; background: rgba(245, 245, 245, .85); }
.nv { width: 22px; height: 22px; flex: none; }
.nv-caret { width: 0; height: 0; margin-left: 6px; border: 3.500px solid transparent; border-top: 4.500px solid #444; border-bottom: 0; }
.nv-caret-s { margin-left: 5px; }
.nv-look { margin-left: 7px; }
.nv-hand { margin-left: 11px; }
.nv-zoom { margin-left: 10px; }
.nv-fit { margin-left: 11px; }
.nv-disp { margin-left: 9px; }
.nv-grid { margin-left: 4px; }
.nv-views { margin-left: 6px; width: 20px; height: 18px; }
.a360 { position: absolute; left: 1886px; top: 749px; width: 18px; height: 18px; }

/* timeline */
.timeline { height: 68px; flex: none; display: flex; align-items: flex-start; background: #f2f2f2; border-top: 2px solid #e4e4e4; border-bottom: 2px solid #3c3c3c; position: relative; }
.transport { display: flex; gap: 15px; padding: 20px 0 0 13px; }
.tp { width: 16px; height: 18px; }
.history { margin-left: 29px; padding-top: 17px; position: relative; }
.hist-icons { display: flex; gap: 8px; }
.hi { width: 22px; height: 22px; }
.hist-rail { width: 241px; height: 7px; margin: 6px 0 0 11px; border-bottom: 2px solid #c6c6c6; display: flex; justify-content: space-between; }
.hist-rail i { width: 1px; height: 7px; background: #c6c6c6; }
.marker { position: absolute; left: 258px; top: 10px; width: 16px; height: 40px; }
.tl-gear { width: 20px; height: 20px; position: absolute; left: 1884px; top: 20px; }
```

FILE: grid.js
```js
// Floor grid of the 3D viewport: two families of lines in light perspective.
(function () {
  var NS = "http://www.w3.org/2000/svg";
  var host = document.getElementById("grid");
  function line(x1, y1, x2, y2, major) {
    var l = document.createElementNS(NS, "line");
    l.setAttribute("x1", x1); l.setAttribute("y1", y1);
    l.setAttribute("x2", x2); l.setAttribute("y2", y2);
    l.setAttribute("stroke", major ? "#c9c9c9" : "#ededed");
    l.setAttribute("stroke-width", major ? "1.100" : "1");
    host.appendChild(l);
  }
  var sub = 5, i, t;
  // nearly horizontal family
  for (i = 0; i <= 10 * sub; i++) {
    t = 577 + 53.1 * i / sub;
    line(200, t - 0.0253 * 1720, 1920, t, i % sub === 0);
  }
  // receding family
  for (i = -2 * sub; i <= 14 * sub; i++) {
    t = i / sub;
    var top = 1057 + 124 * t;
    line(top, 555 + 0.0256 * (top - 1057), 397 + 129 * t, 953, i % sub === 0);
  }
})();
```
